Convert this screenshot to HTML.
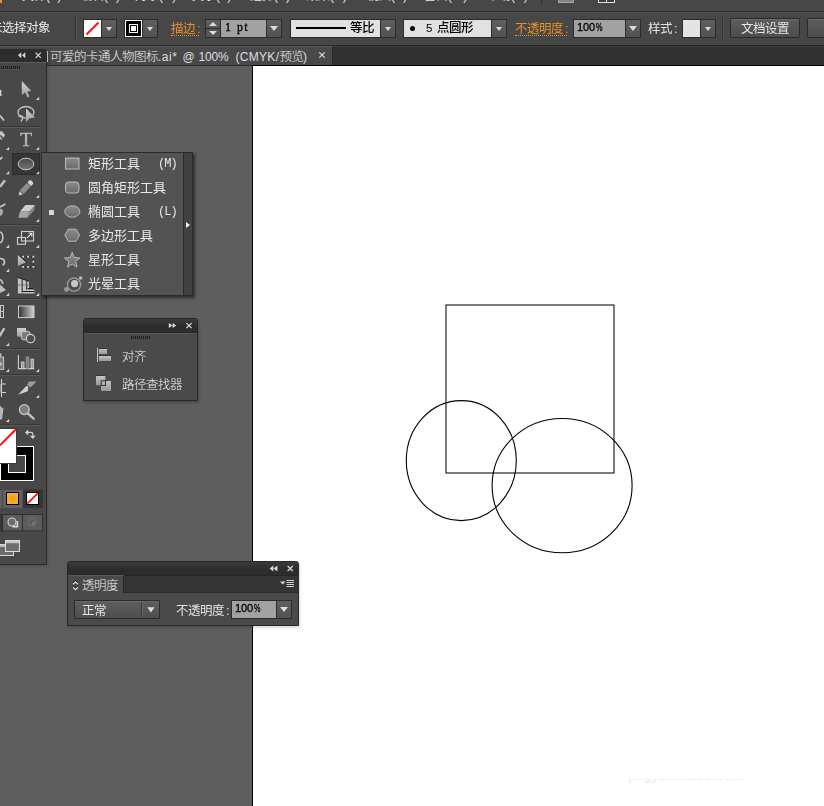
<!DOCTYPE html>
<html lang="zh-CN">
<head>
<meta charset="utf-8">
<title>Illustrator</title>
<style>
html,body{margin:0;padding:0;}
body{width:824px;height:806px;overflow:hidden;position:relative;background:#5e5e5e;
  font-family:"Liberation Sans","Noto Sans CJK SC",sans-serif;font-size:12px;color:#dcdcdc;}
.abs{position:absolute;}
#app{position:absolute;left:0;top:0;width:824px;height:806px;overflow:hidden;}
/* ---------- menu bar ---------- */
#menubar{left:0;top:0;width:824px;height:11px;background:#474747;overflow:hidden;}
#menubar span{position:absolute;top:-11px;font-size:12px;line-height:14px;color:#e6e6e6;white-space:nowrap;}
#mline{left:0;top:11px;width:824px;height:1px;background:#2b2b2b;}
/* ---------- control bar ---------- */
#ctrl{left:0;top:12px;width:824px;height:33px;background:#474747;border-top:1px solid #535353;box-sizing:border-box;}
#cline{left:0;top:45px;width:824px;height:1px;background:#282828;}
.lbl{position:absolute;white-space:nowrap;line-height:14px;font-size:12.5px;letter-spacing:-0.5px;}
.orange{color:#e8902a;}
.dot-u{position:absolute;height:0;border-bottom:1px dotted #e8902a;}
.box{position:absolute;box-sizing:border-box;border:1px solid #2c2c2c;}
.dd{position:absolute;box-sizing:border-box;border:1px solid #2c2c2c;background:linear-gradient(#5f5f5f,#525252);}
.dd:after{content:"";position:absolute;left:50%;top:50%;margin-left:-3.5px;margin-top:-1.5px;border-left:3.5px solid transparent;border-right:3.5px solid transparent;border-top:4px solid #dcdcdc;}
.vsep{position:absolute;width:1px;background:#333;box-shadow:1px 0 0 #525252;}
.mono{position:absolute;font-family:"Liberation Sans",sans-serif;font-size:11px;color:#000;-webkit-text-stroke:0.3px #000;line-height:15px;white-space:nowrap;}
.mono i{display:inline-block;width:6px;text-align:center;font-style:normal;}
.mono i.pc{transform:scaleX(0.66);}
.mono.sf{font-family:"Liberation Serif",serif;font-size:12px;}
.dd.big:after{margin-left:-4px;margin-top:-3px;border-left-width:4px;border-right-width:4px;border-top-width:5.5px;}
.blk{position:absolute;color:#000;font-weight:500;font-size:12.5px;letter-spacing:-0.5px;line-height:17px;white-space:nowrap;}
.btn{position:absolute;box-sizing:border-box;border:1px solid #2a2a2a;border-radius:2px;background:linear-gradient(#5d5d5d,#4c4c4c);box-shadow:inset 0 1px 0 #6a6a6a;color:#e6e6e6;font-size:12.5px;letter-spacing:-0.5px;line-height:20px;text-align:center;}
.fi{position:absolute;left:46px;font-size:13px;letter-spacing:0;line-height:15px;color:#e8e8e8;white-space:nowrap;}
.fk{position:absolute;left:116px;margin-top:1px;font-size:12px;line-height:15px;color:#e8e8e8;white-space:nowrap;font-family:"Liberation Mono","Noto Sans CJK SC",monospace;letter-spacing:-1px;}
.pt{position:absolute;font-weight:300;font-size:12.5px;letter-spacing:-0.5px;line-height:15px;color:#eceff2;white-space:nowrap;}
.lbl,.fi,.fk,.blk,.mono,.gs{will-change:transform;}
/* ---------- tab bar ---------- */
#tabbar{left:0;top:46px;width:824px;height:19px;background:#313131;border-top:1px solid #3c3c3c;box-sizing:border-box;}
#tab{left:0px;top:46px;width:333px;height:19px;background:#494949;border-top:1px solid #575757;border-right:1px solid #292929;box-sizing:border-box;}
#tabline{left:47px;top:65px;width:777px;height:1px;background:#2b2b2b;}
/* ---------- document ---------- */
#artboard{left:252px;top:65px;width:600px;height:800px;background:#fff;border:1px solid #000;}
</style>
</head>
<body>
<div id="app">

<!-- menu bar (cropped at top of screenshot) -->
<div id="menubar" class="abs">
  <span style="left:22px">文件(F)</span>
  <span style="left:80px">编辑(E)</span>
  <span style="left:135px">对象(O)</span>
  <span style="left:192px">文字(T)</span>
  <span style="left:250px">选择(S)</span>
  <span style="left:306px">效果(C)</span>
  <span style="left:367px">视图(V)</span>
  <span style="left:424px">窗口(W)</span>
  <span style="left:487px">帮助(H)</span>
  <div class="abs" style="left:541px;top:0;width:1px;height:5px;background:#333"></div>
  <div class="abs" style="left:558px;top:-8px;width:16px;height:11px;background:#858585;border:1px solid #a8a8a8;box-sizing:border-box"></div>
  <div class="abs" style="left:598px;top:-9px;width:15px;height:10px;border:1px solid #e0e0e0;background:#3a3a3a"></div>
  <div class="abs" style="left:606px;top:0;width:1px;height:2px;background:#e0e0e0"></div>
  <div class="abs" style="left:0;top:0;width:2px;height:3px;background:#e8912a"></div>
</div>
<div id="mline" class="abs"></div>

<!-- control bar -->
<div id="ctrl" class="abs"></div>
<div id="cline" class="abs"></div>
<div class="lbl" style="left:-10px;top:21px;color:#e8e8e8">未选择对象</div>
<div class="vsep" style="left:75px;top:16px;height:25px"></div>
<!-- fill swatch -->
<div class="box" style="left:83px;top:19px;width:19px;height:19px;background:#fff">
  <svg width="17" height="17" viewBox="0 0 17 17" style="display:block"><line x1="2.5" y1="14.5" x2="14.5" y2="2.5" stroke="#ff1010" stroke-width="2"/></svg>
</div>
<div class="dd" style="left:101px;top:19px;width:16px;height:19px"></div>
<!-- stroke swatch -->
<div class="box" style="left:124px;top:19px;width:19px;height:19px;background:#000;border-color:#2c2c2c">
  <div class="abs" style="left:0;top:0;width:15px;height:15px;border:1px solid #fff"></div>
  <div class="abs" style="left:6px;top:6px;width:5px;height:5px;background:#fff;box-shadow:0 0 0 1px #000,0 0 0 2px #fff"></div>
</div>
<div class="dd" style="left:142px;top:19px;width:16px;height:19px"></div>
<!-- stroke weight -->
<div class="lbl orange" style="left:171px;top:22px;">描边<span style="padding-left:2px">:</span></div>
<div class="dot-u" style="left:171px;top:35px;width:28px"></div>
<div class="box spin" style="left:205px;top:19px;width:16px;height:19px;background:#555">
  <div class="abs" style="left:0;top:0;width:14px;height:8px;background:linear-gradient(#5f5f5f,#555);border-bottom:1px solid #2c2c2c"></div>
  <div class="abs" style="left:3px;top:2px;border-left:4px solid transparent;border-right:4px solid transparent;border-bottom:4px solid #dcdcdc"></div>
  <div class="abs" style="left:3px;top:11px;border-left:4px solid transparent;border-right:4px solid transparent;border-top:4px solid #dcdcdc"></div>
</div>
<div class="box" style="left:220px;top:19px;width:47px;height:19px;background:#a2a2a2"><span class="mono sf" style="left:4px;top:0px"><i>1</i><i>&nbsp;</i><i>p</i><i>t</i></span></div>
<div class="dd big" style="left:266px;top:19px;width:16px;height:19px"></div>
<!-- variable width profile -->
<div class="box" style="left:290px;top:19px;width:91px;height:19px;background:#e1e1e1">
  <div class="abs" style="left:5px;top:7px;width:50px;height:2px;background:#000"></div>
  <span class="blk" style="left:59px;top:0px">等比</span>
</div>
<div class="dd" style="left:380px;top:19px;width:16px;height:19px"></div>
<!-- brush -->
<div class="box" style="left:403px;top:19px;width:89px;height:19px;background:#e1e1e1">
  <div class="abs" style="left:5.6px;top:5.7px;width:5.4px;height:5.4px;border-radius:50%;background:#000"></div>
  <span class="blk" style="left:21.5px;top:-0.5px;font-size:11.5px">5</span><span class="blk" style="left:33px;top:0px">点圆形</span>
</div>
<div class="dd" style="left:491px;top:19px;width:16px;height:19px"></div>
<!-- opacity -->
<div class="lbl orange" style="left:515px;top:22px;">不透明度<span style="padding-left:2px">:</span></div>
<div class="dot-u" style="left:515px;top:35px;width:52px"></div>
<div class="box" style="left:573px;top:19px;width:53px;height:19px;background:#a2a2a2"><span class="mono" style="left:3px;top:0px"><i>1</i><i>0</i><i>0</i><i class="pc">%</i></span></div>
<div class="dd big" style="left:625px;top:19px;width:16px;height:19px"></div>
<!-- style -->
<div class="lbl" style="left:648px;top:22px;color:#e2e2e2">样式<span style="padding-left:2px">:</span></div>
<div class="box" style="left:682px;top:19px;width:19px;height:19px;background:#e4e4e4"></div>
<div class="dd" style="left:700px;top:19px;width:16px;height:19px"></div>
<div class="vsep" style="left:722px;top:16px;height:25px"></div>
<div class="btn" style="left:730px;top:18px;width:70px;height:20px"><span class="gs" style="display:block">文档设置</span></div>
<div class="btn" style="left:807px;top:18px;width:70px;height:20px"></div>

<!-- tab bar -->
<div id="tabbar" class="abs"></div>
<div id="tab" class="abs"></div>
<div class="abs" style="left:47px;top:51px;width:1px;height:11px;background:#cfd6d8"></div>
<div id="tabtxt" class="abs" style="left:0;top:50px;line-height:14px;font-size:12px;color:#dcdfe2;white-space:nowrap"><span class="abs" style="left:50px;font-size:12.5px;letter-spacing:-0.5px;font-weight:300;color:#eef0f2">可爱的卡通人物图标</span><span class="abs" style="left:158px;letter-spacing:0.5px">.ai*</span><span class="abs" style="left:182.5px">@</span><span class="abs" style="left:198.5px;letter-spacing:-0.2px">100%</span><span class="abs" style="left:235.5px;letter-spacing:0.3px">(CMYK/</span><span class="abs" style="left:279.5px;font-size:12.5px;letter-spacing:-0.5px;font-weight:300;color:#eef0f2">预览</span><span class="abs" style="left:303px">)</span></div>
<svg class="abs" style="left:318px;top:51px" width="9" height="9" viewBox="0 0 9 9"><path d="M1.3 1.3L6.7 6.7M6.7 1.3L1.3 6.7" stroke="#dedede" stroke-width="1.2" fill="none"/></svg>
<div id="tabline" class="abs"></div>

<!-- document -->
<div id="artboard" class="abs"></div>
<svg id="art" class="abs" style="left:380px;top:280px" width="300" height="300" viewBox="380 280 300 300">
  <rect x="446" y="305" width="168" height="168" fill="none" stroke="#000" stroke-width="1.02"/>
  <ellipse cx="461.3" cy="460.6" rx="55" ry="60" fill="none" stroke="#000" stroke-width="1.1"/>
  <ellipse cx="562.1" cy="485.6" rx="70" ry="67.1" fill="none" stroke="#000" stroke-width="1.1"/>
</svg>
<div class="abs" style="left:629px;top:779px;width:130px;height:9px;overflow:hidden"><span id="wm" class="abs" style="left:0;top:-11.4px;font-size:13px;line-height:16px;font-style:italic;font-weight:bold;color:#ebebeb;white-space:nowrap">jingyan.baidu.com</span></div>

<!-- tool panel -->
<svg class="abs" style="left:0;top:49px;will-change:transform;box-shadow:1px 1px 3px rgba(0,0,0,0.18)" width="47" height="516" viewBox="0 49 47 516">
<defs>
<linearGradient id="gI" x1="0" y1="0" x2="0" y2="1"><stop offset="0" stop-color="#d2d2d2"/><stop offset="1" stop-color="#9e9e9e"/></linearGradient>
<linearGradient id="gT" x1="0" y1="0" x2="0" y2="1"><stop offset="0" stop-color="#c8c8c8"/><stop offset="1" stop-color="#a2a2a2"/></linearGradient>
<linearGradient id="gD" x1="0" y1="0" x2="0" y2="1"><stop offset="0" stop-color="#9a9a9a"/><stop offset="1" stop-color="#6e6e6e"/></linearGradient>
<linearGradient id="gH" x1="0" y1="0" x2="1" y2="0"><stop offset="0" stop-color="#333"/><stop offset="1" stop-color="#cfcfcf"/></linearGradient>
<linearGradient id="gE" x1="0" y1="0" x2="0" y2="1"><stop offset="0" stop-color="#484848"/><stop offset="1" stop-color="#767676"/></linearGradient>
<radialGradient id="gO" cx="0.5" cy="0.55" r="0.7"><stop offset="0" stop-color="#f09a08"/><stop offset="1" stop-color="#fdb73a"/></radialGradient>
</defs>
<path d="M0 49H44Q47 49 47 52V565H0Z" fill="#2a2a2a"/>
<path d="M0 49H43.5Q46 49 46 51.5V62H0Z" fill="#2d2d2d"/>
<rect x="0" y="62" width="46" height="502" fill="#484848"/>
<rect x="0" y="62" width="46" height="1" fill="#5a5a5a"/>
<path d="M21.3 52.2L18 55.2L21.3 58.2ZM25.3 52.2L22 55.2L25.3 58.2Z" fill="#d8d8d8"/>
<path d="M35.6 52.6L40.8 57.8M40.8 52.6L35.6 57.8" stroke="#dedede" stroke-width="1.2" fill="none"/>
<rect x="1" y="66" width="1" height="3" fill="#1c1c1c"/><rect x="1" y="69" width="1" height="1" fill="#5c5c5c"/>
<rect x="3" y="66" width="1" height="3" fill="#1c1c1c"/><rect x="3" y="69" width="1" height="1" fill="#5c5c5c"/>
<rect x="5" y="66" width="1" height="3" fill="#1c1c1c"/><rect x="5" y="69" width="1" height="1" fill="#5c5c5c"/>
<rect x="7" y="66" width="1" height="3" fill="#1c1c1c"/><rect x="7" y="69" width="1" height="1" fill="#5c5c5c"/>
<rect x="9" y="66" width="1" height="3" fill="#1c1c1c"/><rect x="9" y="69" width="1" height="1" fill="#5c5c5c"/>
<rect x="11" y="66" width="1" height="3" fill="#1c1c1c"/><rect x="11" y="69" width="1" height="1" fill="#5c5c5c"/>
<rect x="13" y="66" width="1" height="3" fill="#1c1c1c"/><rect x="13" y="69" width="1" height="1" fill="#5c5c5c"/>
<rect x="15" y="66" width="1" height="3" fill="#1c1c1c"/><rect x="15" y="69" width="1" height="1" fill="#5c5c5c"/>
<rect x="17" y="66" width="1" height="3" fill="#1c1c1c"/><rect x="17" y="69" width="1" height="1" fill="#5c5c5c"/>
<rect x="19" y="66" width="1" height="3" fill="#1c1c1c"/><rect x="19" y="69" width="1" height="1" fill="#5c5c5c"/>
<rect x="0" y="126" width="41" height="1" fill="#383838"/><rect x="0" y="127" width="41" height="1" fill="#585858"/>
<rect x="0" y="224" width="41" height="1" fill="#383838"/><rect x="0" y="225" width="41" height="1" fill="#585858"/>
<rect x="0" y="298" width="41" height="1" fill="#383838"/><rect x="0" y="299" width="41" height="1" fill="#585858"/>
<rect x="0" y="348" width="41" height="1" fill="#383838"/><rect x="0" y="349" width="41" height="1" fill="#585858"/>
<rect x="0" y="374" width="41" height="1" fill="#383838"/><rect x="0" y="375" width="41" height="1" fill="#585858"/>
<rect x="0" y="424" width="41" height="1" fill="#383838"/><rect x="0" y="425" width="41" height="1" fill="#585858"/>
<path d="M39.2 96.7V100.0H35.9Z" fill="#d2d2d2"/>
<path d="M39.2 146.7V150.0H35.9Z" fill="#d2d2d2"/>
<path d="M9.2 146.7V150.0H5.9Z" fill="#d2d2d2"/>
<path d="M9.2 170.9V174.2H5.9Z" fill="#d2d2d2"/>
<path d="M39.2 170.9V174.2H35.9Z" fill="#d2d2d2"/>
<path d="M39.2 194.7V198.0H35.9Z" fill="#d2d2d2"/>
<path d="M39.2 218.7V222.0H35.9Z" fill="#d2d2d2"/>
<path d="M9.2 244.7V248.0H5.9Z" fill="#d2d2d2"/>
<path d="M39.2 244.7V248.0H35.9Z" fill="#d2d2d2"/>
<path d="M9.2 268.7V272.0H5.9Z" fill="#d2d2d2"/>
<path d="M9.2 292.7V296.0H5.9Z" fill="#d2d2d2"/>
<path d="M39.2 292.7V296.0H35.9Z" fill="#d2d2d2"/>
<path d="M9.2 342.7V346.0H5.9Z" fill="#d2d2d2"/>
<path d="M9.2 368.7V372.0H5.9Z" fill="#d2d2d2"/>
<path d="M39.2 368.7V372.0H35.9Z" fill="#d2d2d2"/>
<path d="M39.2 394.7V398.0H35.9Z" fill="#d2d2d2"/>
<path d="M9.2 418.7V422.0H5.9Z" fill="#d2d2d2"/>
<path d="M0 89.5L2.2 91.5L0.8 92.2L2 95.5L0 96Z" fill="#d0d0d0"/>
<path d="M21.8 81V95.2L25 92.3L27.4 97.6L29.6 96.6L27.2 91.5L31.3 91Z" fill="url(#gI)"/>
<path d="M0 115.5L4 120.5" stroke="#c8c8c8" stroke-width="1.8" fill="none"/>
<ellipse cx="26" cy="112.3" rx="8" ry="5.8" fill="none" stroke="#c4c4c4" stroke-width="1.3"/>
<path d="M18.5 116.5Q21 114.8 22.5 116.5Q23.2 118.5 21 121.5" fill="none" stroke="#c4c4c4" stroke-width="1.3"/>
<path d="M26 108.5L35 117.6L29.5 118.2L26 122.2Z" fill="url(#gI)"/>
<path d="M0 131.5L1.8 131L5.2 135L3.6 137.4L0 134.8Z" fill="#c4c4c4"/><path d="M0 136.2L2.6 138.4L1.2 139.8L0 139.2Z" fill="#b0b0b0"/>
<text x="26.1" y="146.2" text-anchor="middle" font-family="Liberation Serif,serif" font-size="19.8" fill="url(#gT)" stroke="#b4b4b4" stroke-width="0.4">T</text>
<path d="M0 159.5L2.2 157" stroke="#d0d0d0" stroke-width="1.6" fill="none"/>
<rect x="12" y="153" width="28" height="22" fill="#2c2c2c"/><rect x="13" y="154" width="26" height="20" fill="#363636"/>
<ellipse cx="26" cy="164" rx="7.8" ry="5.8" fill="url(#gE)" stroke="#c6c6c6" stroke-width="1"/>
<path d="M39.2 170.9V174.2H35.9Z" fill="#d2d2d2"/>
<path d="M0 186.8L5 180.2" stroke="#bdbdbd" stroke-width="2.5" fill="none"/>
<g transform="rotate(-47 25.5 188.2)"><path d="M15.5 188.2L19.5 185.6V190.8Z" fill="#cfcfcf"/><rect x="19.5" y="185.6" width="11" height="5.2" fill="#8e8e8e"/><rect x="30.5" y="185.6" width="4.5" height="5.2" rx="1.6" fill="#d4d4d4"/><path d="M19.5 185.6V190.8M30.5 185.6V190.8" stroke="#333" stroke-width="0.7"/></g>
<path d="M0 207L5.5 204" stroke="#c8c8c8" stroke-width="1.8" fill="none"/><path d="M0 208.5Q3.5 209 3 212Q2.5 215.5 0 216Z" fill="#a8a8a8"/>
<path d="M25.5 205H35L29.5 211.5H20Z" fill="#cdcdcd"/><path d="M20 211.5H29.5L27.5 217.8H18.3Z" fill="#a6a6a6"/><path d="M29.5 211.5L35 205L34.2 210.2L27.5 217.8Z" fill="#8a8a8a"/>
<path d="M0 232Q3 233 2.8 238Q2.6 242 0 242.8" fill="none" stroke="#c8c8c8" stroke-width="1.5"/>
<rect x="21.5" y="231.5" width="12" height="9.5" fill="#484848" stroke="#d0d0d0" stroke-width="1.1"/><rect x="17.5" y="237.5" width="8" height="6.8" fill="none" stroke="#d0d0d0" stroke-width="1.1"/><path d="M27.2 237.8L31.6 233.4M28.6 233.2H31.8V236.4" stroke="#e6e6e6" stroke-width="1.1" fill="none"/>
<path d="M0 258.5Q4.5 258.5 4.5 262Q4.5 264.5 2.5 264.8" fill="none" stroke="#c8c8c8" stroke-width="1.7"/>
<rect x="23.2" y="256.7" width="10.1" height="10.2" fill="none" stroke="#1e1e1e" stroke-width="1" stroke-dasharray="1.2 1.3"/><rect x="22.3" y="255.8" width="1.8" height="1.8" fill="#dadada"/><rect x="27.2" y="255.8" width="1.8" height="1.8" fill="#dadada"/><rect x="32.4" y="255.8" width="1.8" height="1.8" fill="#dadada"/><rect x="32.4" y="260.8" width="1.8" height="1.8" fill="#dadada"/><rect x="32.4" y="266" width="1.8" height="1.8" fill="#dadada"/><rect x="27.2" y="266" width="1.8" height="1.8" fill="#dadada"/><rect x="22.3" y="266" width="1.8" height="1.8" fill="#dadada"/><path d="M17.9 254.6L26.2 262.2L17.9 265.9Z" fill="url(#gI)"/><path d="M17.9 254.4L26.2 262" stroke="#1c1c1c" stroke-width="0.9" fill="none"/>
<path d="M0 279.5Q2.8 281 2.6 284" fill="none" stroke="#c0c0c0" stroke-width="1.6"/><path d="M0 284.5L6 290L0 293Z" fill="#bdbdbd"/>
<path d="M17.9 277.8L29 281.5V288.2H33.2V290H34.5V293.6H17.9Z" fill="#c4c4c4"/><path d="M22.2 279.2V292.4M26.6 280.7V289.8" stroke="#484848" stroke-width="1.3" fill="none"/><path d="M17.9 285H29" stroke="#606060" stroke-width="0.8"/><path d="M27.6 288.7H33.2M22.6 291.5H34.4" stroke="#1c1c1c" stroke-width="1.2" fill="none"/><path d="M17.9 277.5L29 281.2" stroke="#1c1c1c" stroke-width="0.9"/>
<rect x="-3" y="305.5" width="6.5" height="12" fill="none" stroke="#c8c8c8" stroke-width="1"/><path d="M0 311.5H3.5M0.5 305.5V317.5" stroke="#c8c8c8" stroke-width="1"/>
<rect x="18.5" y="306" width="15.5" height="11.6" fill="url(#gH)" stroke="#cfcfcf" stroke-width="1"/>
<path d="M0 335.5L3.8 329" stroke="#c4c4c4" stroke-width="2.4" fill="none" stroke-linecap="round"/>
<rect x="17" y="328" width="9" height="8.6" fill="url(#gI)"/><rect x="21.4" y="331.4" width="8.6" height="8.4" rx="2.2" fill="#7c7c7c" stroke="#cdcdcd" stroke-width="1"/><circle cx="30.6" cy="338.6" r="4.2" fill="#4e4e4e" stroke="#d2d2d2" stroke-width="1.1"/>
<rect x="-3" y="357" width="6.6" height="12.4" fill="#7a7a7a" stroke="#c8c8c8" stroke-width="1"/><rect x="-1" y="353.4" width="2.4" height="3" fill="#c8c8c8"/><circle cx="0.2" cy="364" r="1.8" fill="#c8c8c8"/>
<path d="M18.4 355V368.6H34.2" fill="none" stroke="#d0d0d0" stroke-width="1.1"/><rect x="21.4" y="362" width="2.6" height="6.4" fill="#9a9a9a" stroke="#d0d0d0" stroke-width="0.9"/><rect x="26.2" y="357.2" width="2.6" height="11.2" fill="#7a7a7a" stroke="#9a9a9a" stroke-width="0.9"/><rect x="31" y="359.2" width="2.6" height="9.2" fill="#9a9a9a" stroke="#d0d0d0" stroke-width="0.9"/>
<path d="M1.5 379V397M1 384H6M1 392.5H6" stroke="#d0d0d0" stroke-width="1.1" fill="none"/><rect x="-3" y="384" width="4" height="8.5" fill="#8a8a8a"/>
<path d="M29 381.6H36.4L30.6 387.6L27 385Z" fill="#9c9c9c"/><path d="M18 394.8L26.6 385.8L28.4 387L27.8 391.2Z" fill="#d0d0d0"/>
<path d="M0 405.5L2.6 408.5L3.6 407.6L2 419.6H0Z" fill="#b8b8b8"/>
<circle cx="24.3" cy="409.6" r="4.9" fill="#7e7e7e" stroke="#c6c6c6" stroke-width="1.3"/><path d="M28 413.6L33.6 418.6" stroke="#c0c0c0" stroke-width="2.4" stroke-linecap="round"/>
<rect x="0" y="446" width="34" height="35" fill="#000"/><rect x="0.5" y="446.5" width="33" height="34" fill="none" stroke="#fff" stroke-width="1"/>
<rect x="8.5" y="455.5" width="17" height="17" fill="#484848" stroke="#fff" stroke-width="1"/>
<rect x="-2" y="428" width="19" height="36" fill="#3a3a3a"/><rect x="-2" y="429" width="18" height="34" fill="#fff"/><path d="M16 429.3L0 445.3" stroke="#ff0a0a" stroke-width="2"/>
<path d="M27.2 432.4H31.2Q32.8 432.4 32.8 434V437" fill="none" stroke="#d0d0d0" stroke-width="1.2"/><path d="M25 432.4L28.2 429.4V435.4Z" fill="#d0d0d0"/><path d="M32.8 439L29.8 435.8H35.8Z" fill="#d0d0d0"/>
<rect x="-2" y="490" width="4" height="18" fill="#5e5e5e"/>
<rect x="3" y="490" width="19.5" height="18" fill="#616161"/><rect x="6" y="492" width="13" height="13" fill="#000"/><rect x="7" y="493" width="11" height="11" fill="url(#gO)"/>
<rect x="23" y="489.5" width="20" height="18.5" fill="#363636"/><rect x="26" y="492" width="13" height="13" fill="#000"/><rect x="27" y="493" width="11" height="11" fill="#fff"/><path d="M27.3 503.7L37.7 493.3" stroke="#ff0a0a" stroke-width="1.7"/>
<rect x="-2" y="514" width="45" height="17.4" fill="#303030"/><rect x="-2" y="515" width="3" height="15.4" fill="#3a3a3a"/>
<rect x="3" y="515" width="19" height="15.4" fill="#5c5c5c"/><rect x="23" y="515" width="19" height="15.4" fill="#5c5c5c"/>
<path d="M12.4 526.6H17.4V521" fill="none" stroke="#d8d8d8" stroke-width="1.6"/><circle cx="12" cy="522" r="4" fill="#6c6c6c" stroke="#d6d6d6" stroke-width="1.1"/>
<circle cx="32" cy="522" r="3.9" fill="none" stroke="#707070" stroke-width="1"/><path d="M32 522H36V524L32 526Z" fill="#727272"/>
<rect x="-2" y="544.5" width="15.5" height="11" fill="#6a6a6a" stroke="#d8d8d8" stroke-width="1"/><rect x="-2" y="545" width="15" height="2" fill="#bdbdbd"/>
<rect x="5.5" y="540.5" width="14" height="11" fill="#6e6e6e" stroke="#dedede" stroke-width="1"/><rect x="6" y="541" width="13" height="2.2" fill="#c6c6c6"/>
</svg>
<!-- shape tool flyout -->
<div id="fly" class="abs" style="left:41px;top:152px;width:152px;height:144px;box-sizing:border-box;background:#535353;border:1px solid #2b2b2b;box-shadow:2px 2px 2.5px rgba(0,0,0,0.5)">
  <div class="abs" style="left:141px;top:0;width:8px;height:142px;background:#414141;border-left:1px solid #2c2c2c"></div>
  <div class="abs" style="left:144px;top:69px;border-top:3px solid transparent;border-bottom:3px solid transparent;border-left:4px solid #f0f0f0"></div>
  <div class="abs" style="left:7px;top:57px;width:5px;height:5px;background:#d6d6d6"></div>
  <svg class="abs" style="left:0;top:0" width="60" height="141" viewBox="42 153 60 141">
    <defs><linearGradient id="fg" x1="0" y1="0" x2="0" y2="1"><stop offset="0" stop-color="#8c8c8c"/><stop offset="1" stop-color="#6a6a6a"/></linearGradient></defs>
    <rect x="65.5" y="158" width="13.5" height="11" fill="url(#fg)" stroke="#bcbcbc" stroke-width="1"/>
    <rect x="65.5" y="182" width="13.5" height="11" rx="3" fill="url(#fg)" stroke="#bcbcbc" stroke-width="1"/>
    <ellipse cx="72.3" cy="211.5" rx="7.6" ry="5.7" fill="url(#fg)" stroke="#bcbcbc" stroke-width="1"/>
    <path d="M64.8 235.2L68.4 229.2H76L79.6 235.2L76 241.2H68.4Z" fill="url(#fg)" stroke="#bcbcbc" stroke-width="1"/>
    <path d="M72.2 252.4L74.3 257.6L79.8 258L75.6 261.6L77 267L72.2 264L67.4 267L68.8 261.6L64.6 258L70.1 257.6Z" fill="url(#fg)" stroke="#bcbcbc" stroke-width="1"/>
    <circle cx="74" cy="284.6" r="6.6" fill="#4a4a4a" stroke="#9a9a9a" stroke-width="1.4"/>
    <circle cx="74.6" cy="283.6" r="3.6" fill="#c6c6c6"/>
    <circle cx="66.4" cy="289.4" r="2.4" fill="#9a9a9a"/>
    <circle cx="80.6" cy="278" r="1.7" fill="#bdbdbd"/>
  </svg>
  <span class="fi" style="top:3px">矩形工具</span><span class="fk" style="top:3px">(M)</span>
  <span class="fi" style="top:27px">圆角矩形工具</span>
  <span class="fi" style="top:51px">椭圆工具</span><span class="fk" style="top:51px">(L)</span>
  <span class="fi" style="top:75px">多边形工具</span>
  <span class="fi" style="top:99px">星形工具</span>
  <span class="fi" style="top:123px">光晕工具</span>
</div>
<!-- align / pathfinder collapsed panel -->
<div class="abs" style="left:83px;top:318px;width:115px;height:83px;box-sizing:border-box;background:#4a4a4a;border:1px solid #272727;border-radius:3px 3px 0 0;box-shadow:1px 2px 3px rgba(0,0,0,0.2)">
  <div class="abs" style="left:0;top:0;width:113px;height:13px;background:linear-gradient(#3a3a3a,#2c2c2c 60%);border-radius:2px 2px 0 0;border-bottom:1px solid #262626"></div>
  <div class="abs" style="left:0;top:14px;width:113px;height:1px;background:#585858"></div>
  <svg class="abs" style="left:0;top:0" width="113" height="81" viewBox="84 319 113 81">
    <defs><linearGradient id="ag" x1="0" y1="0" x2="0" y2="1"><stop offset="0" stop-color="#c4c4c4"/><stop offset="1" stop-color="#989898"/></linearGradient></defs>
    <path d="M168.8 322.9L172.4 325.5L168.8 328.1ZM172.6 322.9L176.2 325.5L172.6 328.1Z" fill="#dcdcdc"/>
    <path d="M186.4 323.1L191.6 328.1M191.6 323.1L186.4 328.1" stroke="#dedede" stroke-width="1.2" fill="none"/>
    <g fill="#1c1c1c"><rect x="131" y="336" width="1" height="3"/><rect x="133" y="336" width="1" height="3"/><rect x="135" y="336" width="1" height="3"/><rect x="137" y="336" width="1" height="3"/><rect x="139" y="336" width="1" height="3"/><rect x="141" y="336" width="1" height="3"/><rect x="143" y="336" width="1" height="3"/><rect x="145" y="336" width="1" height="3"/><rect x="147" y="336" width="1" height="3"/><rect x="149" y="336" width="1" height="3"/></g>
    <rect x="97" y="348" width="1" height="14" fill="#c8c8c8"/>
    <rect x="99" y="348.2" width="8" height="1" fill="#2e2e2e"/><rect x="99" y="349" width="8" height="5" fill="url(#ag)"/>
    <rect x="99" y="355.2" width="12" height="1" fill="#2e2e2e"/><rect x="99" y="356" width="12" height="5" fill="url(#ag)"/>
    <rect x="96" y="375.2" width="9.3" height="1" fill="#2e2e2e"/><rect x="96" y="376" width="9.3" height="9.2" fill="url(#ag)"/>
    <rect x="101" y="381" width="10" height="10" fill="url(#ag)"/>
    <rect x="101.2" y="380.8" width="4.4" height="4.6" fill="#b2b2b2" stroke="#262626" stroke-width="0.9"/>
  </svg>
  <span class="pt" style="left:38px;top:31px">对齐</span>
  <span class="pt" style="left:38px;top:59px">路径查找器</span>
</div>
<!-- transparency panel -->
<div class="abs" style="left:67px;top:561px;width:232px;height:65px;box-sizing:border-box;background:#4a4a4a;border:1px solid #272727;border-radius:3px 3px 0 0;box-shadow:1px 2px 3px rgba(0,0,0,0.14)">
  <div class="abs" style="left:0;top:0;width:230px;height:13px;background:linear-gradient(#3a3a3a,#2c2c2c 60%);border-radius:2px 2px 0 0"></div>
  <div class="abs" style="left:0;top:13px;width:230px;height:18px;background:#353535;border-top:1px solid #242424;border-bottom:1px solid #2a2a2a;box-sizing:border-box"></div>
  <div class="abs" style="left:0;top:13px;width:56px;height:18px;background:#4a4a4a;border-top:1px solid #5a5a5a;border-right:1px solid #2a2a2a;box-sizing:border-box"></div>
  <svg class="abs" style="left:0;top:0" width="230" height="63" viewBox="68 562 230 63">
    <path d="M277.4 565.6L273.6 568.5L277.4 571.4ZM273.4 565.6L269.6 568.5L273.4 571.4Z" fill="#dcdcdc"/>
    <path d="M287.6 566L292.8 571M292.8 566L287.6 571" stroke="#dedede" stroke-width="1.2" fill="none"/>
    <path d="M280 581.4H285.6L282.8 584.4Z" fill="#d6d6d6"/>
    <path d="M286.5 580.5H294M286.5 582.5H294M286.5 584.5H294M286.5 586.5H294" stroke="#d0d0d0" stroke-width="1"/>
    <path d="M73.1 583.2L75.5 580.8L77.9 583.2M73.1 586.3L75.5 588.7L77.9 586.3" fill="none" stroke="#161616" stroke-width="1.3"/><path d="M73.1 584.2L75.5 581.8L77.9 584.2M73.1 587.3L75.5 589.7L77.9 587.3" fill="none" stroke="#dedede" stroke-width="1.3"/>
  </svg>
  <span class="pt" style="left:14px;top:17px">透明度</span>
  <div class="abs" style="left:6px;top:38px;width:86px;height:19px;box-sizing:border-box;border:1px solid #2a2a2a;border-radius:1px;background:linear-gradient(#5e5e5e,#4e4e4e);box-shadow:inset 0 1px 0 #686868">
    <span class="abs gs" style="left:7px;top:2px;font-size:12.5px;letter-spacing:-0.5px;line-height:17px;color:#e6e6e6;white-space:nowrap">正常</span>
    <div class="abs" style="left:66px;top:2px;width:1px;height:13px;background:#3a3a3a;box-shadow:1px 0 0 #666"></div>
    <svg class="abs" style="left:72px;top:6px" width="8" height="6" viewBox="0 0 8 6"><path d="M0.3 0.2H7.5L3.9 5.4Z" fill="#dcdcdc"/></svg>
  </div>
  <span class="abs gs" style="left:108px;top:41px;font-size:12.5px;letter-spacing:-0.5px;line-height:17px;color:#e2e2e2;white-space:nowrap">不透明度<span style="padding-left:2px">:</span></span>
  <div class="box" style="left:163px;top:38px;width:46px;height:19px;background:#a2a2a2"><span class="mono" style="left:3px;top:0px"><i>1</i><i>0</i><i>0</i><i class="pc">%</i></span></div>
  <div class="dd big" style="left:208px;top:38px;width:16px;height:19px"></div>
</div>

</div>
</body>
</html>
